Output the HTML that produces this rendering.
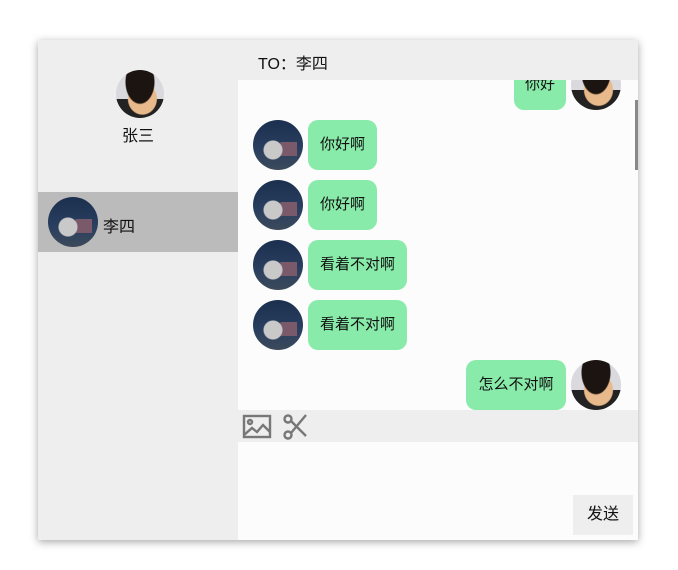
<!DOCTYPE html>
<html><head><meta charset="utf-8"><style>
*{margin:0;padding:0;box-sizing:border-box}
body{width:678px;height:570px;background:#fff;font-family:"Liberation Sans","Noto Sans CJK SC",sans-serif;font-size:15px;color:#111;position:relative;overflow:hidden}
.box{position:absolute;left:38px;top:40px;width:600px;height:500px;box-shadow:0 2px 8px rgba(0,0,0,.35);background:#fcfcfc;overflow:hidden}
.side{position:absolute;left:0;top:0;width:200px;height:500px;background:#eeeeee;z-index:3}
.av{position:absolute;width:50px;height:50px;border-radius:50%;overflow:hidden}
.ls{background:radial-gradient(circle at 40% 60%,#c9c9c9 0 9px,transparent 10px),linear-gradient(90deg,transparent 55%,#7a5a6a 55% 88%,transparent 88%) 0 22px/100% 14px no-repeat,linear-gradient(#1b2f4f,#2a3f5f 60%,#3c4a5a)}
.zs{background:radial-gradient(ellipse at 50% 25%,#1c1410 0 14px,transparent 15px),radial-gradient(ellipse at 55% 60%,#e8b98a 0 14px,transparent 15px),linear-gradient(#d9d9de 60%,#222 60%)}
.hdr{position:absolute;left:200px;top:0;width:400px;height:40px;background:#eeeeee;padding:10px 0 0 20px;font-size:16px;z-index:3}
.b{position:absolute;background:#89eba9;border-radius:10px;height:50px;line-height:50px;padding:0 12px;font-size:15px}
.tool{position:absolute;left:200px;top:370px;width:400px;height:32px;background:#eeeeee}
.send{position:absolute;left:535px;top:455px;width:60px;height:40px;background:#eeeeee;text-align:center;line-height:40px;font-size:16px}
</style></head><body>
<div class="box">
<div class="side">
 <div class="av zs" style="left:78px;top:30px;width:48px;height:48px"></div>
 <div style="position:absolute;left:0;width:200px;top:82px;text-align:center;font-size:16px">张三</div>
 <div style="position:absolute;left:0;top:152px;width:200px;height:60px;background:#bbbbbb">
  <div class="av ls" style="left:10px;top:5px"></div>
  <div style="position:absolute;left:65px;top:21px;font-size:16px">李四</div>
 </div>
</div>
<div class="hdr">TO：李四</div>
<div class="b" style="left:476px;top:20px;width:52px;padding:0;text-align:center">你好</div>
<div class="av zs" style="left:533px;top:20px"></div>
<div class="av ls" style="left:215px;top:80px"></div><div class="b" style="left:270px;top:80px">你好啊</div>
<div class="av ls" style="left:215px;top:140px"></div><div class="b" style="left:270px;top:140px">你好啊</div>
<div class="av ls" style="left:215px;top:200px"></div><div class="b" style="left:270px;top:200px">看着不对啊</div>
<div class="av ls" style="left:215px;top:260px"></div><div class="b" style="left:270px;top:260px">看着不对啊</div>
<div class="b" style="left:428px;top:320px;width:100px;padding:0;text-align:center">怎么不对啊</div>
<div class="av zs" style="left:533px;top:320px"></div>
<div style="position:absolute;left:597px;top:60px;width:3px;height:70px;background:#888"></div>
<div class="tool">
 <svg width="80" height="32" viewBox="0 0 80 32"><g fill="none" stroke="#777" stroke-width="2.4">
 <rect x="6" y="6" width="26" height="21"/><circle cx="12" cy="12" r="2"/><path d="M6 25 L14 18 L19 22 L25 15 L32 22"/>
 <circle cx="50" cy="25" r="3.5"/><circle cx="50" cy="9" r="3.5"/><path d="M53 11 L68 26 M53 23 L68 5"/></g></svg>
</div>
<div class="send">发送</div>
</div>
</body></html>
